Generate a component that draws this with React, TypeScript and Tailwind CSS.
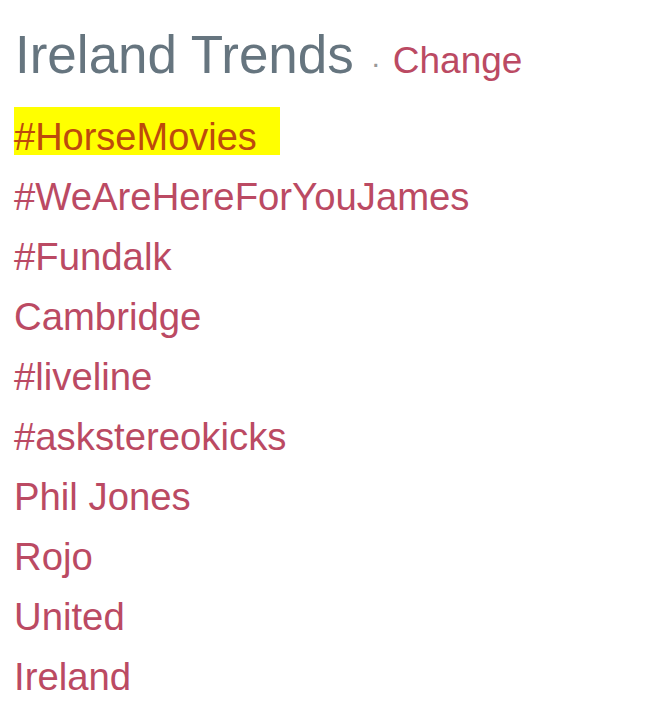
import React from "react";

const trends = [
  "#WeAreHereForYouJames",
  "#Fundalk",
  "Cambridge",
  "#liveline",
  "#askstereokicks",
  "Phil Jones",
  "Rojo",
  "United",
  "Ireland",
];

export default function App() {
  return (
    <div
      className="w-[650px] h-[719px] bg-white pl-[14px] pt-[20px]"
      style={{ fontFamily: '"Liberation Sans", Arial, sans-serif' }}
    >
      <div className="h-[87px] leading-[70px] whitespace-nowrap">
        <span className="text-[53px] text-[#66757f] pl-[1px]">Ireland Trends</span>
        <span className="text-[30px] text-[#999999] ml-[17px] mr-[12px]">·</span>
        <span className="text-[37px] text-[#bb4a63]">Change</span>
      </div>
      <div className="flex flex-col">
        <div className="h-[60px] leading-[60px]">
          <span className="inline-block w-[266px] h-[48px] bg-[#ffff00] text-[38px] leading-[60px] text-[#bd4a0c] align-top">
            <span className="block">#HorseMovies</span>
          </span>
        </div>
        {trends.map((t) => (
          <div key={t} className="h-[60px] leading-[60px] text-[38.3px] text-[#bb4a63] whitespace-nowrap">
            {t}
          </div>
        ))}
      </div>
    </div>
  );
}
